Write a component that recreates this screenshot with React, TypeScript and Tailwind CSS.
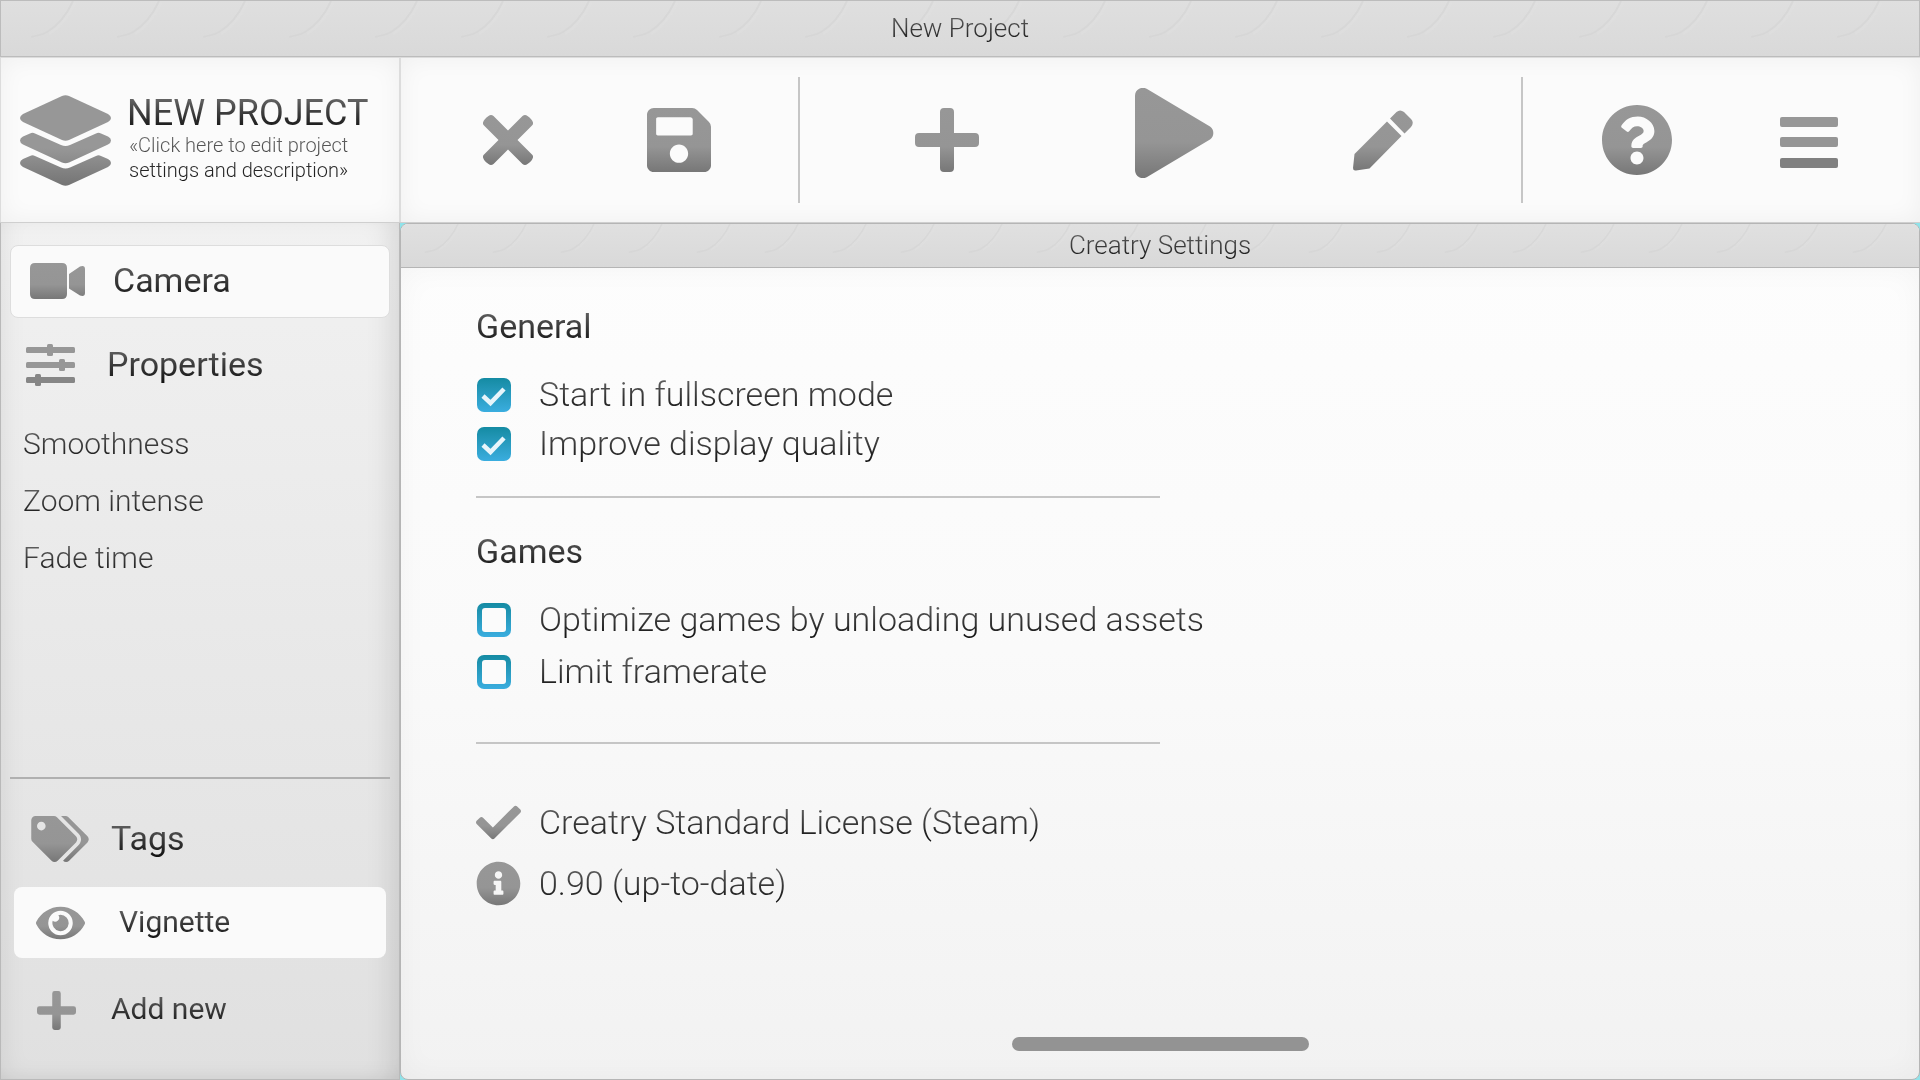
import React from 'react';
import { FaCheck, FaEye, FaInfoCircle, FaQuestionCircle, FaSave, FaTags } from 'react-icons/fa';

const STEEL = 'url(#steel)';

function Defs() {
  return (
    <svg className="absolute size-0" aria-hidden="true">
      <defs>
        <linearGradient id="steel" x1="0" y1="0" x2="0" y2="1">
          <stop offset="0" stopColor="#979797" />
          <stop offset="0.6" stopColor="#959595" />
          <stop offset="1" stopColor="#777777" />
        </linearGradient>
      </defs>
    </svg>
  );
}

/* Text whose colour runs from grey at the cap line to black at the descenders. */
function Ink({ children, className = '' }: { children: React.ReactNode; className?: string }) {
  return (
    <span className={'bg-linear-to-b from-[#707070] to-[#0c0c0c] bg-clip-text pb-[2px] text-transparent ' + className}>
      {children}
    </span>
  );
}

function Curls({ id, step }: { id: string; step: number }) {
  return (
    <svg className="absolute inset-0 size-full" aria-hidden="true">
      <defs>
        <pattern id={id} width={step} height="56" patternUnits="userSpaceOnUse">
          <path d="M72 0C66 13 56 25 46 31C40 35 36 34 30 36" transform={`scale(${step / 86})`} fill="none" stroke="#d2d2d2" strokeWidth="2" opacity="0.5" />
          <path d="M74 2C68 15 58 27 48 33" transform={`scale(${step / 86})`} fill="none" stroke="#e2e2e2" strokeWidth="2" opacity="0.4" />
        </pattern>
      </defs>
      <rect width="100%" height="100%" fill={`url(#${id})`} />
    </svg>
  );
}

function LayersIcon() {
  return (
    <svg viewBox="0 0 91 91" className="size-[91px] shrink-0" aria-hidden="true">
      <g fill="#979797">
        <path d="M42 1Q45.500 -0.500 49 1L88 19Q91 21 91 23Q91 25.500 88 27L49 45Q45.500 46.500 42 45L3 27Q0 25.500 0 23Q0 21 3 19Z" />
        <path d="M10 38.500Q12.500 37 15 38.500L41 50Q45.500 52 50 50L76 38.500Q78.500 37 81 38.500L88 41.500Q91 43 91 45.500Q91 48 88 49.500L49 67.500Q45.500 69 42 67.500L3 49.500Q0 48 0 45.500Q0 43 3 41.500Z" fill="url(#layerMid)" />
        <path d="M10 61Q12.500 59.500 15 61L41 72.500Q45.500 74.500 50 72.500L76 61Q78.500 59.500 81 61L88 64Q91 65.500 91 68Q91 70.500 88 72L49 90Q45.500 91.500 42 90L3 72Q0 70.500 0 68Q0 65.500 3 64Z" fill="url(#layerLow)" />
      </g>
      <defs>
        <linearGradient id="layerMid" x1="0" y1="0" x2="0" y2="1">
          <stop offset="0.5" stopColor="#979797" />
          <stop offset="1" stopColor="#8a8a8a" />
        </linearGradient>
        <linearGradient id="layerLow" x1="0" y1="0" x2="0" y2="1">
          <stop offset="0" stopColor="#909090" />
          <stop offset="1" stopColor="#747474" />
        </linearGradient>
      </defs>
    </svg>
  );
}

function CloseIcon() {
  return (
    <svg viewBox="0 0 50 50" className="size-[50px]" aria-hidden="true">
      <path
        fill={STEEL}
        d="M5.500 1Q8 -1 10.500 1L25 15.500L39.500 1Q42 -1 44.500 1Q49 4 50 7.500Q50.500 9 49 10.500L34.500 25L49 39.500Q50.500 41 50 42.500Q49 46 44.500 49Q42 51 39.500 49L25 34.500L10.500 49Q8 51 5.500 49Q1 46 0 42.500Q-0.500 41 1 39.500L15.500 25L1 10.500Q-0.500 9 0 7.500Q1 4 5.500 1Z"
      />
    </svg>
  );
}

function PlusIcon({ className }: { className: string }) {
  return (
    <svg viewBox="0 0 64 64" className={className} aria-hidden="true">
      <path
        fill={STEEL}
        d="M29 0H35Q39 0 39 4V25H60Q64 25 64 29V35Q64 39 60 39H39V60Q39 64 35 64H29Q25 64 25 60V39H4Q0 39 0 35V29Q0 25 4 25H25V4Q25 0 29 0Z"
      />
    </svg>
  );
}

function PlayIcon() {
  return (
    <svg viewBox="0 0 79 90" className="h-[90px] w-[79px]" aria-hidden="true">
      <path fill={STEEL} d="M0 8A8 8 0 0 1 12.500 1.300L75 38.500A8 8 0 0 1 75 51.500L12.500 88.700A8 8 0 0 1 0 82Z" />
    </svg>
  );
}

function PencilIcon() {
  return (
    <svg viewBox="0 0 60 61" className="h-[61px] w-[60px]" aria-hidden="true">
      <path
        fill={STEEL}
        d="M34 11.500L48.500 26L16.500 58.500L3 60.500Q0 61 0 58L1.500 44ZM37 8.500L43.500 2Q47 -1 51 2L58 9Q61.500 12.500 58 17L51.500 23.500Z"
      />
    </svg>
  );
}

function BurgerIcon() {
  return (
    <svg viewBox="0 0 58 51" className="h-[51px] w-[58px]" aria-hidden="true">
      <rect width="58" height="10" rx="2" fill="#979797" />
      <rect y="20" width="58" height="10" rx="2" fill="#959595" />
      <rect y="41" width="58" height="10" rx="2" fill="#808080" />
    </svg>
  );
}

function CameraIcon() {
  return (
    <svg viewBox="0 0 55 36" className="h-9 w-[55px] shrink-0" aria-hidden="true">
      <path
        fill={STEEL}
        d="M5 0H32Q37 0 37 5V31Q37 36 32 36H5Q0 36 0 31V5Q0 0 5 0ZM39 11L50 3.500Q55 2 55 6V30Q55 34 50 32.500L39 25.500Z"
      />
    </svg>
  );
}

function SlidersIcon() {
  return (
    <svg viewBox="0 0 49 42" className="h-[42px] w-[49px] shrink-0" aria-hidden="true">
      <g fill="#979797">
        <rect y="3" width="49" height="6" rx="1.500" />
        <rect x="21" width="6" height="12" rx="1.500" />
        <rect y="18" width="49" height="6" rx="1.500" />
        <rect x="33" y="15" width="6" height="12" rx="1.500" />
      </g>
      <g fill="#868686">
        <rect y="33" width="49" height="6" rx="1.500" />
        <rect x="9" y="30" width="6" height="12" rx="1.500" />
      </g>
    </svg>
  );
}

function CheckRow({ label, checked, className }: { label: string; checked?: boolean; className: string }) {
  return (
    <label className={'flex items-center gap-7 ' + className}>
      <span className="relative flex size-[34px] shrink-0">
        <input
          type="checkbox"
          defaultChecked={checked}
          className="peer size-full appearance-none rounded-[7px] bg-linear-to-b from-[#148ba3] to-[#3aaddf]"
        />
        <span className="pointer-events-none absolute inset-[5px] rounded-[3px] bg-[#fbfbfb] peer-checked:hidden" />
        <svg viewBox="0 0 34 34" className="pointer-events-none absolute inset-0 hidden peer-checked:block" aria-hidden="true">
          <path d="M6 18L13.500 25L27 11" fill="none" stroke="#e8f5fb" strokeWidth="4.500" />
        </svg>
      </span>
      <Ink className="text-[34px] leading-[40px] font-light">{label}</Ink>
    </label>
  );
}

const rule = 'h-[2px] border-0 bg-[#c6c6c6]';

export default function App() {
  return (
    <div className="flex min-h-screen flex-col bg-[#8fe3ea] font-['Roboto',sans-serif]">
      <Defs />
      <header className="relative flex h-[57px] items-center justify-center border border-[#bcbcbc] bg-linear-to-b from-[#dfdfdf] to-[#d9d9d9]">
        <Curls id="curlsTop" step={86} />
        <h1 className="relative flex text-[26px] leading-8 font-light">
          <Ink>New Project</Ink>
        </h1>
      </header>

      <div className="flex h-[166px] border-b border-[#cfcfcf] bg-[#fbfbfb]">
        <button
          type="button"
          className="flex w-[401px] shrink-0 items-center gap-4 border-t border-r-2 border-l border-[#dcdcdc] pl-[19px] text-left shadow-[inset_0_0_24px_rgba(0,0,0,0.05)]"
        >
          <LayersIcon />
          <span className="flex flex-col">
            <Ink className="text-4xl leading-9">NEW PROJECT</Ink>
            <Ink className="pl-[2px] text-xl leading-[25px] font-light">
              «Click here to edit project
              <br />
              settings and description»
            </Ink>
          </span>
        </button>
        <nav
          aria-label="Project tools"
          className="grid grow grid-cols-[397fr_725fr_397fr] border-t border-[#dcdcdc] shadow-[inset_0_0_24px_rgba(0,0,0,0.05)]"
        >
          <div className="flex items-center justify-between pr-[87px] pl-[82px]">
            <button type="button" aria-label="Close">
              <CloseIcon />
            </button>
            <button type="button" aria-label="Save">
              <FaSave fill={STEEL} viewBox="0 32 448 448" className="size-16" />
            </button>
          </div>
          <div className="flex items-center justify-between">
            <span className="h-[126px] w-[2px] bg-[#c6c6c6]" />
            <div className="flex grow items-center justify-between pr-[108px] pl-[115px]">
              <button type="button" aria-label="Add">
                <PlusIcon className="size-16" />
              </button>
              <button type="button" aria-label="Play" className="mb-[14px] ml-4">
                <PlayIcon />
              </button>
              <button type="button" aria-label="Edit">
                <PencilIcon />
              </button>
            </div>
            <span className="h-[126px] w-[2px] bg-[#c6c6c6]" />
          </div>
          <div className="flex items-center justify-between pr-[82px] pl-[79px]">
            <button type="button" aria-label="Help">
              <FaQuestionCircle fill={STEEL} viewBox="8 8 496 496" className="size-[70px]" />
            </button>
            <button type="button" aria-label="Menu" className="mt-1">
              <BurgerIcon />
            </button>
          </div>
        </nav>
      </div>

      <div className="flex grow">
        <aside className="flex w-[400px] shrink-0 flex-col border border-t-0 border-[#b9b9b9] bg-linear-to-b from-[#f1f1f1] to-[#e0e0e0] px-[9px] shadow-[inset_-20px_0_28px_-14px_rgba(0,0,0,0.12),inset_12px_-8px_28px_-14px_rgba(0,0,0,0.1)]">
          <button
            type="button"
            className="mt-[22px] flex h-[73px] items-center gap-7 rounded-lg border border-[#dddddd] bg-[#fafafa] pb-[2px] pl-[19px]"
          >
            <CameraIcon />
            <Ink className="text-[34px] leading-[40px]">Camera</Ink>
          </button>
          <button type="button" className="mt-4 flex h-[62px] items-center gap-8 pl-4">
            <SlidersIcon />
            <Ink className="text-[34px] leading-[40px]">Properties</Ink>
          </button>
          <ul className="mt-5 pl-[13px] text-[30px] font-light">
            {['Smoothness', 'Zoom intense', 'Fade time'].map((name) => (
              <li key={name} className="flex h-[57px] items-center">
                <button type="button" className="leading-9">
                  <Ink className="block">{name}</Ink>
                </button>
              </li>
            ))}
          </ul>
          <hr className="mt-auto h-[2px] border-0 bg-[#b0b0b0]" />
          <button type="button" className="mt-[30px] flex h-[60px] items-center gap-[22px] pl-[21px]">
            <FaTags fill={STEEL} className="h-[46px] w-[58px]" />
            <Ink className="text-[34px] leading-[40px]">Tags</Ink>
          </button>
          <button
            type="button"
            className="mx-1 mt-[18px] flex h-[71px] items-center gap-[34px] rounded-lg bg-[#fafafa] pl-[22px]"
          >
            <FaEye fill={STEEL} className="h-[44px] w-[49px]" />
            <Ink className="text-[30px] leading-9">Vignette</Ink>
          </button>
          <button type="button" className="mt-[22px] mb-[39px] flex h-[60px] items-center gap-[35px] pl-[27px]">
            <PlusIcon className="size-[39px]" />
            <Ink className="text-[30px] leading-9">Add new</Ink>
          </button>
        </aside>

        <main className="flex grow flex-col overflow-hidden rounded-lg border border-[#b5b5b5] bg-linear-to-b from-[#fdfdfd] via-[#fafafa] to-[#f2f2f2]">
          <div className="relative flex h-11 items-center justify-center border-b border-[#b5b5b5] bg-linear-to-b from-[#e0e0e0] to-[#d9d9d9]">
            <Curls id="curlsPanel" step={68} />
            <h2 className="relative flex text-[26px] leading-8 font-light">
              <Ink>Creatry Settings</Ink>
            </h2>
          </div>
          <div className="flex grow flex-col px-[75px] pt-[38px] shadow-[inset_0_0_30px_rgba(0,0,0,0.04)]">
            <section className="flex flex-col items-start">
              <h3 className="text-[34px] leading-[40px]">
                <Ink>General</Ink>
              </h3>
              <div className="mt-6">
                <CheckRow label="Start in fullscreen mode" checked className="h-[49px] pl-px" />
                <CheckRow label="Improve display quality" checked className="h-[49px] pl-px" />
              </div>
            </section>
            <hr className={rule + ' mt-7 w-[684px]'} />
            <section className="mt-[33px] flex flex-col items-start">
              <h3 className="text-[34px] leading-[40px]">
                <Ink>Games</Ink>
              </h3>
              <div className="mt-[23px]">
                <CheckRow label="Optimize games by unloading unused assets" className="h-[52px] pl-px" />
                <CheckRow label="Limit framerate" className="h-[52px] pl-px" />
              </div>
            </section>
            <hr className={rule + ' mt-11 w-[684px]'} />
            <section className="mt-12">
              <p className="flex h-[61px] items-center gap-[18px]">
                <FaCheck fill={STEEL} className="size-[45px]" />
                <Ink className="text-[34px] leading-[40px] font-light">Creatry Standard License (Steam)</Ink>
              </p>
              <p className="flex h-[61px] items-center gap-[18px]">
                <FaInfoCircle fill={STEEL} className="size-[45px]" />
                <Ink className="text-[34px] leading-[40px] font-light">0.90 (up-to-date)</Ink>
              </p>
            </section>
            <div className="mt-auto mb-7 h-[14px] w-[297px] self-center rounded-full bg-[#939393]" />
          </div>
        </main>
      </div>
    </div>
  );
}
